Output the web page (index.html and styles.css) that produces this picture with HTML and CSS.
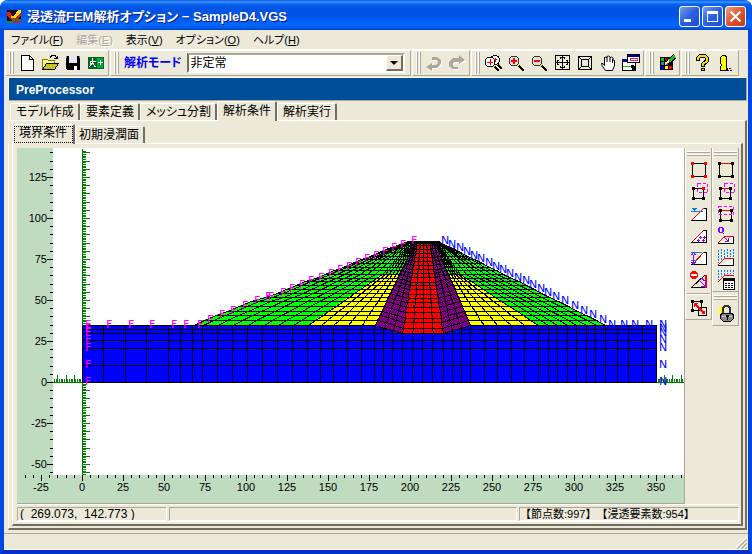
FILE: index.html
```html
<!DOCTYPE html>
<html lang="ja">
<head>
<meta charset="utf-8">
<title>浸透流FEM解析オプション - SampleD4.VGS</title>
<link rel="stylesheet" href="styles.css">
</head>
<body>
<div class="window">
  <header class="titlebar">
    <svg class="app-icon" viewBox="0 0 16 16" shape-rendering="crispEdges" aria-hidden="true">
      <path fill="#200808" d="M1 1h14v13H1z"/>
      <path fill="#e02010" d="M1 3h3l2 4h3l3-5h3v4l-5 5H5L1 6z"/>
      <path fill="#ffd820" d="M12 1h3v2l-5 6H5V7h3z"/>
      <path fill="#208040" d="M0 12h5l2-2h8v2H8l-2 2H0z"/>
      <path fill="#c02020" d="M8 12h7v2H7z"/>
    </svg>
    <h1>浸透流FEM解析オプション − SampleD4.VGS</h1>
    <div class="window-buttons">
      <button type="button" aria-label="最小化"><svg viewBox="0 0 19 19" shape-rendering="crispEdges"><path fill="#fff" d="M4 12h7v3H4z"/></svg></button>
      <button type="button" aria-label="最大化"><svg viewBox="0 0 19 19" shape-rendering="crispEdges"><path fill="#fff" fill-rule="evenodd" d="M4 4h11v11H4zM5 7v7h9V7z"/></svg></button>
      <button type="button" class="close" aria-label="閉じる"><svg viewBox="0 0 19 19"><path stroke="#fff" stroke-width="2.3" d="M4.500 4.500l10 10m0-10l-10 10"/></svg></button>
    </div>
  </header>

  <nav class="menubar">
    <button type="button">ファイル(<u>F</u>)</button>
    <button type="button" disabled>編集(<u>E</u>)</button>
    <button type="button">表示(<u>V</u>)</button>
    <button type="button">オプション(<u>O</u>)</button>
    <button type="button">ヘルプ(<u>H</u>)</button>
  </nav>

  <div class="toolbar">
    <div class="group">
      <span class="grip"></span>
      <button type="button" aria-label="新規"><svg viewBox="0 0 20 20" shape-rendering="crispEdges"><path fill="#fff" stroke="#000" d="M4.500 2.500h8l4 4v11h-12zM12.500 2.500v4h4"/></svg></button>
      <button type="button" aria-label="開く"><svg viewBox="0 0 20 20" shape-rendering="crispEdges"><path fill="#ffff80" stroke="#808000" d="M2.500 16.500v-10h5l1 1h6v3h-8z"/><path fill="#c8c020" stroke="#000" d="M2.500 16.500l4-6h12l-4 6z"/><path fill="none" stroke="#000" d="M10 4.500l2-2h3l2 3m-3 0h3v-3"/></svg></button>
      <button type="button" aria-label="保存"><svg viewBox="0 0 20 20" shape-rendering="crispEdges"><path d="M3 3h14v14H4l-1-1z"/><path fill="#e0e8f0" d="M6 3h8v7H6z"/><path fill="#58a0a8" d="M3 3h1v2H3zM16 3h1v2h-1z"/><path fill="#fff" d="M11 13h3v4h-3z"/></svg></button>
      <button type="button" aria-label="終了"><svg viewBox="0 0 20 20" shape-rendering="crispEdges"><path fill="#006820" d="M2 4h16v12H2z"/><path fill="#00a840" d="M11 5h6v10h-6z"/><path fill="none" stroke="#fff" d="M6.500 5v2m-3 1.500h6M6.500 7v3l-3 4m3-4l3 4M4 11.500v-3M12 9.500h5m-2.500-2.500v5"/></svg></button>
    </div>
    <div class="group mode">
      <span class="grip"></span>
      <label for="mode">解析モード</label>
      <span class="combo"><select id="mode"><option>非定常</option><option>定常</option></select><span class="arrow" aria-hidden="true"></span></span>
    </div>
    <div class="group">
      <span class="grip"></span>
      <button type="button" disabled aria-label="元に戻す"><svg viewBox="0 0 20 20"><g transform="translate(1 1)" fill="#fff"><path d="M8 4h5l4 3v4l-4 4H8v3l-6-4 6-4v2h4l2-2V8l-2-1H8z"/></g><path fill="#aca899" d="M8 4h5l4 3v4l-4 4H8v3l-6-4 6-4v2h4l2-2V8l-2-1H8z"/></svg></button>
      <button type="button" disabled aria-label="やり直し"><svg viewBox="0 0 20 20"><g transform="translate(1 1)" fill="#fff"><path d="M12 2l6 5-6 4V9H8l-2 1v2l1 2h4v2H6l-4-3V9l4-4h6z"/></g><path fill="#aca899" d="M12 2l6 5-6 4V9H8l-2 1v2l1 2h4v2H6l-4-3V9l4-4h6z"/></svg></button>
    </div>
    <div class="group">
      <span class="grip"></span>
      <button type="button" aria-label="拡大縮小"><svg viewBox="0 0 20 20" shape-rendering="crispEdges"><path stroke="#e8d800" stroke-width="2" d="M10 12l4 4M14 10l3 3"/><path stroke="#000" stroke-width="2" d="M12 14l4 4M15 12l4 4"/><circle cx="12" cy="7" r="4.500" fill="#fff" stroke="#000"/><circle cx="7" cy="9" r="5" fill="#fff" stroke="#000"/><path stroke="#f00" d="M4 9.500h6M7.500 6v6M11 6.500h3M12.500 5v4"/></svg></button>
      <button type="button" aria-label="拡大"><svg viewBox="0 0 20 20" shape-rendering="crispEdges"><path stroke="#e8d800" stroke-width="2" d="M11 11l3 3"/><path stroke="#000" stroke-width="2" d="M13 13l5 5"/><circle cx="8" cy="8" r="5" fill="#ddd" stroke="#333"/><path stroke="#f00" stroke-width="2" d="M5 8h6M8 5v6"/></svg></button>
      <button type="button" aria-label="縮小"><svg viewBox="0 0 20 20" shape-rendering="crispEdges"><path stroke="#e8d800" stroke-width="2" d="M11 11l3 3"/><path stroke="#000" stroke-width="2" d="M13 13l5 5"/><circle cx="8" cy="8" r="5" fill="#ddd" stroke="#333"/><path stroke="#f00" stroke-width="2" d="M5 8h6"/></svg></button>
      <button type="button" aria-label="全体表示"><svg viewBox="0 0 20 20" shape-rendering="crispEdges"><path fill="none" stroke="#000" d="M3.500 2.500h14v14h-14zM10.500 3v13M4 9.500h13M8 5.500l2.500-2 2.500 2M8 13.500l2.500 2 2.500-2M6.500 7l-2 2.500 2 2.500M14.500 7l2 2.500-2 2.500"/></svg></button>
      <button type="button" aria-label="枠表示"><svg viewBox="0 0 20 20" shape-rendering="crispEdges"><path fill="none" stroke="#000" d="M3.500 3.500h13v13h-13zM6.500 6.500h7v7h-7zM4 4l3 3M16 4l-3 3M4 16l3-3M16 16l-3-3"/></svg></button>
      <button type="button" aria-label="移動"><svg viewBox="0 0 20 20"><path fill="#fff" stroke="#000" d="M7.500 17.500L4 12.500l-.5-2H5l1.500 2v-8L8 4l1 1V3.500L10.500 3 12 4v1l1.500-1L15 5v2l1.500.5v5l-2 5zM9 5v4M12 5v4M14.500 6v4"/></svg></button>
      <button type="button" aria-label="ウィンドウ"><svg viewBox="0 0 20 20" shape-rendering="crispEdges"><path fill="#fff" stroke="#000" d="M1.500 6.500h13v11h-13z"/><path fill="#0000a0" d="M1 6h6v3H1z"/><path stroke="#0c0" d="M2 13.500h8"/><path stroke="#000" stroke-width="3" d="M10 13h3M12 13v4"/><path fill="#fff" stroke="#000" d="M6.500 1.500h12v8h-12z"/><path fill="#0000a0" d="M7 2h11v2H7z"/><path fill="#fff" stroke="#e02080" d="M9.500 5.500h7v2h-7z"/></svg></button>
    </div>
    <div class="group">
      <span class="grip"></span>
      <button type="button" aria-label="配色"><svg viewBox="0 0 20 20" shape-rendering="crispEdges"><path d="M3 4h13v13H3z"/><path fill="#0c0" d="M4 5h3v3H4z"/><path fill="#a00000" d="M8 5h3v3H8z"/><path fill="#0a8" d="M4 9h3v3H4z"/><path fill="#c0f" d="M8 9h3v3H8z"/><path fill="#00f" d="M4 13h3v3H4z"/><path fill="#ff0" d="M8 13h3v3H8z"/><path fill="#f00" d="M12 13h3v3h-3z"/><path stroke="#000" stroke-width="5" d="M11 9l7-6"/><path stroke="#2b2" stroke-width="3" d="M12 8l6-5"/><path stroke="#fe6" stroke-width="2" d="M8 11l4-3"/></svg></button>
    </div>
    <div class="group">
      <span class="grip"></span>
      <button type="button" aria-label="ヘルプ"><svg viewBox="0 0 20 20" shape-rendering="crispEdges"><g fill="none" stroke-width="4"><path stroke="#000" d="M5 8V5l2-2h5l2 2v3l-4 3v3m0 1v3"/><path stroke="#e8e000" stroke-width="2" d="M5 7V5l2-2h5l2 2v3l-4 3v2m0 3v1"/></g></svg></button>
      <button type="button" aria-label="情報"><svg viewBox="0 0 20 20" shape-rendering="crispEdges"><path fill="#ff0" stroke="#000" d="M4.500 4.500l2-2h3l1 2v11l1 2h-7v-4l1-1-1-4z"/><path fill="none" stroke="#000" stroke-dasharray="2 1" d="M10 15.500h6M11 17.500h6"/></svg></button>
    </div>
  </div>

  <main class="workspace">
    <h2>PreProcessor</h2>
    <div class="tabs main-tabs" role="tablist">
      <button type="button" role="tab">モデル作成</button>
      <button type="button" role="tab">要素定義</button>
      <button type="button" role="tab">メッシュ分割</button>
      <button type="button" role="tab" aria-selected="true">解析条件</button>
      <button type="button" role="tab">解析実行</button>
    </div>
    <div class="panel outer">
      <div class="tabs sub-tabs" role="tablist">
        <button type="button" role="tab" aria-selected="true"><span>境界条件</span></button>
        <button type="button" role="tab">初期浸潤面</button>
      </div>
      <div class="panel inner">
        <div class="view">
          <svg id="mesh" class="mesh" viewBox="17 148 667 355" role="img" aria-label="解析メッシュ"></svg>
          <div class="palettes">
            <div class="palette">
              <span class="grip"></span>
              <button type="button" aria-label="節点選択"><svg viewBox="0 0 20 20" shape-rendering="crispEdges"><path fill="none" stroke="#000" d="M3.500 3.500h13v13h-13z"/><path fill="#f00" d="M2 2h3v3H2zM15 2h3v3h-3zM2 15h3v3H2zM15 15h3v3h-3z"/></svg></button>
              <button type="button" aria-label="節点枠選択"><svg viewBox="0 0 20 20" shape-rendering="crispEdges"><path fill="none" stroke="#000" d="M4.500 6.500h10v10h-10z"/><path d="M3 5h3v3H3zM3 15h3v3H3zM13 15h3v3h-3z"/><path fill="none" stroke="#f0f" stroke-dasharray="3 2" d="M8.500 1.500h10v9h-10z"/><path fill="#f00" d="M13 5h3v3h-3z"/></svg></button>
              <button type="button" aria-label="水位"><svg viewBox="0 0 20 20" shape-rendering="crispEdges"><path fill="#fff" stroke="#000" d="M2 16.500h15.500v-12h-3"/><path fill="none" stroke="#f00" d="M3 16L15 4"/><path stroke="#0080ff" d="M2 7.500h12"/><path fill="#0080ff" d="M3 4h5L6 7H5z"/></svg></button>
              <button type="button" aria-label="要素"><svg viewBox="0 0 20 20" shape-rendering="crispEdges"><path fill="#fff" stroke="#000" d="M2 16.500h15.500v-12h-3"/><path fill="none" stroke="#f00" d="M3 16L15 4"/><path fill="none" stroke="#80f" d="M10 11.500h3m1 0h3M8 14.500h3m2 0h3M11.500 10v3m4-3v3M9.500 13v3m5-3v3"/></svg></button>
              <button type="button" aria-label="水位変動"><svg viewBox="0 0 20 20" shape-rendering="crispEdges"><path fill="#fff" stroke="#000" d="M2 16.500h15.500v-12h-3"/><path fill="none" stroke="#f00" d="M5 15L15 4"/><path stroke="#0080ff" d="M2 4.500h11M2 12.500h6"/><path fill="#80f" d="M4 5h1v11H4zM2 7h5L4 4zM2 14h5l-3 3z"/></svg></button>
              <button type="button" aria-label="境界解除"><svg viewBox="0 0 20 20" shape-rendering="crispEdges"><path fill="#fff" stroke="#000" d="M2 17.500h15M3 17L16 5"/><path fill="none" stroke="#f00" stroke-width="2" d="M17 5v13"/><path fill="none" stroke="#80f" d="M10 10l6 6m-4-8l4 3m-4 5h4v-5"/><circle cx="5" cy="5" r="4" fill="#f00"/><path fill="#fff" d="M2 4h6v2H2z"/></svg></button>
              <hr>
              <button type="button" aria-label="入替"><svg viewBox="0 0 20 20" shape-rendering="crispEdges"><path fill="none" stroke="#000" d="M3.500 3.500h9v9h-9zM9.500 9.500h8v8h-8z"/><path d="M2 2h3v3H2zM11 2h3v3h-3zM2 11h3v3H2z"/><path stroke="#f00" stroke-width="2" d="M6 6l9 9"/><path fill="#f00" d="M5 5h4l-4 4zM16 16v-4l-4 4z"/></svg></button>
            </div>
            <div class="palette-stack">
              <div class="palette">
                <span class="grip"></span>
                <button type="button" aria-label="辺選択"><svg viewBox="0 0 20 20" shape-rendering="crispEdges"><path fill="none" stroke="#000" d="M3.500 3.500h13v13h-13z"/><path stroke="#f00" d="M3 3.500h13"/><path d="M2 2h3v3H2zM15 2h3v3h-3zM2 15h3v3H2zM15 15h3v3h-3z"/></svg></button>
                <button type="button" aria-label="辺枠選択"><svg viewBox="0 0 20 20" shape-rendering="crispEdges"><path fill="none" stroke="#000" d="M4.500 6.500h10v10h-10z"/><path stroke="#f00" d="M5 6.500h9"/><path d="M3 5h3v3H3zM13 5h3v3h-3zM3 15h3v3H3zM13 15h3v3h-3z"/><path fill="none" stroke="#f0f" stroke-dasharray="3 2" d="M8.500 1.500h10v9h-10z"/></svg></button>
                <button type="button" aria-label="全辺選択"><svg viewBox="0 0 20 20" shape-rendering="crispEdges"><path fill="none" stroke="#000" d="M4.500 6.500h11v10h-11z"/><path stroke="#f00" d="M5 6.500h10"/><path d="M3 5h3v3H3zM14 5h3v3h-3zM3 15h3v3H3zM14 15h3v3h-3z"/><path fill="none" stroke="#f0f" stroke-dasharray="3 2" d="M2.500 2.500h15v8h-15z"/></svg></button>
                <button type="button" aria-label="流量"><svg viewBox="0 0 20 20" shape-rendering="crispEdges"><path fill="none" stroke="#80f" d="M3.500 1.500h3v5h-3zM2.500 2v4M7.500 2v4M6 6l2 2"/><path fill="#fff" stroke="#000" d="M2 17.500h15.500v-7"/><path fill="none" stroke="#f00" d="M2 17l7-7h9"/><path fill="none" stroke="#80f" d="M8 11l4 4m0-3v3H9"/></svg></button>
                <button type="button" aria-label="降雨"><svg viewBox="0 0 20 20" shape-rendering="crispEdges"><path fill="none" stroke="#0080ff" stroke-dasharray="2 1" d="M2.500 2v13M5.500 1v11M8.500 2v8M11.500 1v8M14.500 2v7M17.500 1v8"/><path fill="#fff" stroke="#000" d="M2 17.500h15.500v-7"/><path fill="none" stroke="#f00" d="M2 17l7-7h9"/></svg></button>
                <button type="button" aria-label="降雨設定"><svg viewBox="0 0 20 20" shape-rendering="crispEdges"><path fill="none" stroke="#0080ff" stroke-dasharray="2 1" d="M2.500 0v10M5.500 0v7M8.500 0v5M11.500 0v4M14.500 0v4M17.500 0v4"/><path fill="none" stroke="#f00" d="M2 12l7-7h9"/><path fill="#fff" stroke="#000" d="M7.500 8.500h11v11h-11z"/><path d="M7 8h12v3H7z"/><path stroke="#000" stroke-dasharray="2 1" d="M9 13.500h8M9 15.500h8M9 17.500h8"/></svg></button>
              </div>
              <div class="palette">
                <span class="grip"></span>
                <button type="button" aria-label="ロック"><svg viewBox="0 0 20 20" shape-rendering="crispEdges"><path stroke="#ff0" d="M2 3l7 7m0-7l-7 7M5.500 2v10M1 6.500h8"/><path fill="none" stroke="#333" stroke-width="2" d="M7 9V4l2-2h3l2 2v6"/><path fill="#888" stroke="#000" d="M5.500 9.500h11l1 2v3l-3 3h-7l-3-3v-3z"/><path stroke="#ccc" d="M6 12.500h4m3 0h3"/><path d="M10 11h3v2h-1v3h-1v-3h-1z"/></svg></button>
              </div>
            </div>
          </div>
        </div>
        <div class="status">
          <output class="position">(&nbsp; 269.073,&nbsp; 142.773 )</output>
          <span class="message"></span>
          <span class="counts">【節点数:997】【浸透要素数:954】</span>
        </div>
      </div>
    </div>
  </main>
  <footer class="statusbar">
    <svg viewBox="0 0 12 12" aria-hidden="true"><path stroke="#fff" stroke-width="2" d="M1 12L12 1M5 12l7-7M9 12l3-3"/><path stroke="#aca899" stroke-width="1.500" d="M2 12L12 2M6 12l6-6M10 12l2-2"/></svg>
  </footer>
</div>
<script src="mesh.js"></script>
</body>
</html>
```
FILE: mesh.js
```js
// Draws the rulers, the dam section mesh and its boundary-condition marks.
const SCALE = 1.64, X0 = 82, Y0 = 382;
const px = v => Math.round(X0 + v * SCALE);
const py = v => Math.round(Y0 - v * SCALE);
const h = n => Math.round(n) + 0.5;
const out = [];
const rect = (x, y, w, ht, fill) => out.push(`<rect x="${x}" y="${y}" width="${w}" height="${ht}" fill="${fill}"/>`);
const poly = (pts, fill) => out.push(`<polygon fill="${fill}" points="${pts.map(p => p.join()).join(' ')}"/>`);
const path = (d, cls) => out.push(`<path class="${cls}" d="${d}"/>`);
const line = pts => 'M' + pts.map(p => h(p[0]) + ' ' + h(p[1])).join('L');

rect(17, 148, 667, 355, '#c0dcc0');
rect(53, 148, 631, 327, '#fff');

// Rulers
let ticks = '';
for (let v = -55; v <= 140; v += 5) {
  ticks += `M53 ${py(v) + 0.5}h${v % 25 ? -3 : -6}`;
  if (v % 25 === 0) out.push(`<text class="num end" x="47" y="${py(v) + 4}">${v}</text>`);
}
for (let v = -35; v <= 365; v += 5) {
  ticks += `M${px(v) + 0.5} 475v${v % 25 ? 3 : 6}`;
  if (v % 25 === 0) out.push(`<text class="num mid" x="${px(v)}" y="491">${v}</text>`);
}
path(ticks, 'tick');

// Axes through the origin
let axis = `M82.500 149V475M53 382.500H684`;
for (let v = -56; v <= 141; v++) axis += `M83 ${py(v) + 0.5}h${v % 5 ? 3 : 7}`;
for (let v = -17; v <= 366; v++) axis += `M${px(v) + 0.5} 382v${v % 5 ? -3 : -7}`;
path(axis, 'axis');

// Foundation
rect(82, 325, 575, 58, '#00f');
const baseX = [82, 103, 125, 146, 168, 180, 192, 202, 217, 232, 247, 262, 277, 292, 307, 320, 333, 347, 361, 374, 383, 392, 402, 412, 422, 432, 443, 452, 461, 470, 484, 497, 511, 524, 538, 548, 557, 567, 576, 586, 595, 605, 617, 628, 642, 656];
const baseY = [325, 329, 333, 340, 348, 365, 382];
baseX.forEach(x => rect(x, 325, 1, 58, '#000'));
baseY.forEach(y => rect(82, y, 575, 1, '#000'));

// Dam body: outer slope nodes per level, as [y, left x, right x]
const levels = [[241, 408, 438], [245, 397, 445], [248, 388, 453], [252, 379, 460], [256, 370, 467], [259, 361, 474], [263, 352, 482], [267, 343, 489], [270, 334, 496], [274, 325, 503], [278, 315, 511], [281, 305, 519], [285, 296, 526], [289, 286, 534], [293, 277, 541], [297, 265, 549], [301, 251, 558], [306, 239, 568], [311, 227, 577], [315, 216, 586], [320, 204, 596], [325, 194, 605]];
const lerp = (a, b, t) => a + (b - a) * t;
const at = (y, y1, x1, y2, x2) => lerp(x1, x2, (y - y1) / (y2 - y1));
const bounds = ([y, l, r]) => [
  l,
  y > 274 ? at(y, 274, 382, 325, 308) : at(y, 241, 411, 274, 382),
  at(y, 241, 415, 325, 375),
  at(y, 241, 417, 325, 402),
  at(y, 241, 429, 325, 443),
  at(y, 241, 434, 325, 470),
  y > 274 ? at(y, 274, 460, 325, 538) : at(y, 241, 436, 274, 460),
  r
];
const core = y => 241 + (y - 241) * 92 / 84;
const parts = [
  [0, 0.08, 0.21, 0.34, 0.47, 0.61, 0.74, 0.87],
  [0, 0.19, 0.38, 0.59, 0.8],
  [0, 0.33, 0.66],
  [0, 0.25, 0.5, 0.75],
  [0, 0.33, 0.66],
  [0, 0.2, 0.4, 0.6, 0.8],
  [0, 0.15, 0.29, 0.43, 0.57, 0.71, 0.86, 1]
];
const nodeY = (y, zone, t) => {
  if (zone === 3) return core(y);
  if (zone === 2) return lerp(y, core(y), t);
  if (zone === 4) return lerp(core(y), y, t);
  return y;
};
const rows = levels.map(level => {
  const b = bounds(level), row = [];
  parts.forEach((ts, z) => ts.forEach(t => row.push([lerp(b[z], b[z + 1], t), nodeY(level[0], z, t)])));
  return row;
});
const start = [];
parts.reduce((n, ts, i) => (start[i] = n, n + ts.length), 0);
start[7] = rows[0].length - 1;
const zone = (z, from, fill) => {
  const a = rows.slice(from).map(r => r[start[z]]);
  const b = rows.slice(from).map(r => r[start[z + 1]]).reverse();
  poly(a.concat(b), fill);
};
zone(0, 0, '#0f0'); zone(1, 0, '#0f0'); zone(5, 0, '#0f0'); zone(6, 0, '#0f0');
zone(1, 9, '#ff0'); zone(5, 9, '#ff0');
zone(2, 0, '#800080'); zone(4, 0, '#800080');
zone(3, 0, '#f00');
path(rows.map(line).join('') + rows[0].map((_, i) => line(rows.map(r => r[i]))).join(''), 'grid');
rect(415, 241, 20, 3, '#000');

// Boundary conditions: F on the upstream face, N on the downstream face
const mark = (c, x, y) => out.push(`<text class="${c}" x="${x + 3}" y="${y + 3}">${c}</text>`);
[82, 103, 125, 146, 168, 180].forEach(x => mark('F', x, 325));
baseY.slice(1).forEach(y => mark('F', 82, y));
levels.forEach(([y, l, r]) => { mark('F', l, y); mark('N', r, y); });
mark('F', 262, 297);
[617, 628, 642].forEach(x => mark('N', x, 325));
baseY.forEach(y => mark('N', 656, y));

document.getElementById('mesh').innerHTML = out.join('');
```
FILE: styles.css
```css
* { box-sizing: border-box; }
:root {
  --face: #ece9d8;
  --shadow: #aca899;
  --dark: #716f64;
}
body {
  margin: 0;
  background: #fff;
  color: #000;
  font: 12px/16px "Liberation Sans", "Noto Sans CJK JP", sans-serif;
  font-feature-settings: "palt";
}
button, select {
  margin: 0;
  padding: 0;
  border: 0;
  background: none;
  color: inherit;
  font: inherit;
  font-feature-settings: inherit;
  white-space: nowrap;
}
svg { display: block; }
h1, h2 { margin: 0; }

.window {
  display: flex;
  flex-direction: column;
  min-height: 100vh;
  border: solid #0046e0;
  border-width: 0 4px 4px;
  border-bottom-color: #0831c9;
  border-radius: 8px 8px 0 0;
  background: var(--face);
  box-shadow: inset 0 -1px #fff;
}
.titlebar {
  display: flex;
  align-items: center;
  height: 30px;
  margin: 0 -4px;
  padding: 3px 6px 0;
  border-radius: 8px 8px 0 0;
  background: linear-gradient(#0a5be0 0, #3a92ff 2px, #0a62ee 4px, #0054e3 8px, #0055e8 16px, #0066ff 24px, #0062f6 27px, #0042c8 30px);
}
.app-icon { width: 16px; height: 16px; }
.titlebar h1 {
  flex: 1;
  padding-left: 5px;
  color: #fff;
  font-size: 13px;
  line-height: 20px;
  text-shadow: 1px 1px #0a1883;
  white-space: nowrap;
}
.window-buttons { display: flex; gap: 2px; }
.window-buttons button {
  width: 21px;
  height: 21px;
  border: 1px solid #fff;
  border-radius: 3px;
  background: linear-gradient(135deg, #7a9cf0, #2c5fe0 50%, #1c4cc8);
}
.window-buttons .close { background: linear-gradient(135deg, #f0a088, #e0532c 50%, #c83c14); }

.menubar { display: flex; gap: 13px; height: 19px; padding: 0 7px; font-size: 11px; }
.menubar button { line-height: 18px; }
.menubar button:disabled { color: var(--shadow); text-shadow: 1px 1px #fff; }

.toolbar { display: flex; height: 27px; padding-left: 1px; border-top: 1px solid #fff; }
.group {
  display: flex;
  align-items: center;
  margin-right: 1px;
  padding-left: 3px;
  border: solid;
  border-width: 1px;
  border-color: #fff var(--shadow) var(--shadow) #fff;
}
.group button { width: 23px; height: 22px; padding: 1px; }
.group button svg { width: 20px; height: 20px; }
.grip {
  flex: none;
  width: 5px;
  height: 22px;
  margin-right: 2px;
  background: linear-gradient(90deg, #fff 1px, var(--shadow) 1px, var(--shadow) 2px, var(--face) 2px, var(--face) 3px, #fff 3px, #fff 4px, var(--shadow) 4px);
}
.mode { width: 301px; }
.mode label { margin: 0 5px 0 3px; color: #00f; font-weight: bold; white-space: nowrap; }
.combo { position: relative; flex: 1; margin-right: 5px; }
.combo select {
  display: block;
  width: 100%;
  height: 20px;
  padding: 0 18px 2px 2px;
  border: 2px solid;
  border-color: var(--shadow) #fff #fff var(--dark);
  border-radius: 0;
  background: #fff;
  appearance: none;
}
.arrow {
  position: absolute;
  top: 2px;
  right: 2px;
  width: 17px;
  height: 16px;
  border: solid;
  border-width: 1px 2px 2px 1px;
  border-color: #fff var(--dark) var(--dark) #fff;
  background: var(--face);
  pointer-events: none;
}
.arrow::after {
  content: "";
  display: block;
  width: 0;
  margin: 5px auto 0;
  border: 4px solid transparent;
  border-top-color: #000;
  border-bottom: 0;
}

.workspace { margin: 1px 1px 0 4px; }
.workspace h2 {
  height: 24px;
  padding: 4px 7px;
  border: solid;
  border-width: 1px;
  border-color: #fff var(--shadow) var(--shadow) #fff;
  background: #004e98;
  color: #fff;
  font-size: 12px;
  line-height: 16px;
}
.tabs { display: flex; align-items: flex-end; }
.tabs button {
  height: 17px;
  padding: 0 4px 0 5px;
  border: solid;
  border-width: 1px 2px 0 1px;
  border-color: #fff var(--dark) #fff #fff;
  border-radius: 2px 2px 0 0;
  background: var(--face);
  line-height: 15px;
}
.tabs button[aria-selected] { position: relative; height: 20px; margin-bottom: -1px; }
.main-tabs { height: 19px; padding-left: 2px; }
.sub-tabs { height: 22px; padding-left: 1px; }
.sub-tabs button { padding: 0 4px 0 3px; }
.sub-tabs button[aria-selected] { padding: 0; }
.sub-tabs span { display: block; height: 17px; padding: 0 5px 0 4px; border: 1px dotted #000; line-height: 13px; }
.panel { border: solid; border-width: 1px 2px 2px 1px; border-color: #fff var(--dark) var(--dark) #fff; }
.outer { padding: 0 2px 2px 3px; }
.inner { padding: 4px 2px 2px 4px; }

.view { display: flex; }
.mesh {
  flex: 1;
  min-width: 0;
  box-sizing: content-box;
  border: solid var(--shadow);
  border-width: 0 1px 1px 0;
}
.mesh path { fill: none; stroke-width: 1; shape-rendering: crispEdges; }
.mesh rect, .mesh polygon { shape-rendering: crispEdges; }
.tick, .grid { stroke: #000; }
.axis { stroke: #008000; }
.mesh text { font-size: 11px; }
.end { text-anchor: end; }
.mid { text-anchor: middle; }
.mesh .F, .mesh .N { font-family: "DejaVu Sans", sans-serif; }
.F { fill: #f0f; }
.N { fill: #00f; }

.palettes { display: flex; align-items: flex-start; flex: none; width: 54px; }
.palette {
  display: flex;
  flex-direction: column;
  align-items: center;
  width: 27px;
  padding: 3px 0 0;
  border: solid;
  border-width: 0 1px 1px;
  border-color: #fff var(--shadow) var(--shadow) #fff;
}
.palette .grip {
  width: 23px;
  margin: 0 0 3px;
  height: 5px;
  background: linear-gradient(#fff 1px, var(--shadow) 1px, var(--shadow) 2px, var(--face) 2px, var(--face) 3px, #fff 3px, #fff 4px, var(--shadow) 4px);
}
.palette button { height: 22px; padding: 1px; }
.palette svg { width: 20px; height: 20px; }
.palette hr { width: 23px; height: 2px; margin: 2px 0; border: solid; border-width: 1px 0; border-color: var(--shadow) #fff #fff; }

.status { display: flex; gap: 2px; height: 18px; padding-top: 2px; border: solid #fff; border-width: 1px 0; }
.status > * {
  border: 1px solid;
  border-color: var(--shadow) #fff #fff var(--shadow);
  line-height: 13px;
  white-space: pre;
  overflow: hidden;
}
.position { width: 150px; padding-left: 2px; }
.message { flex: 1; }
.counts { width: 220px; font-size: 11px; font-feature-settings: normal; text-spacing-trim: space-all; }

.statusbar {
  display: flex;
  flex: 1;
  align-items: flex-end;
  justify-content: flex-end;
  min-height: 17px;
  margin-top: 3px;
  padding: 0 1px 1px;
  border-top: 1px solid var(--shadow);
}
.statusbar svg { width: 12px; height: 12px; }
```
